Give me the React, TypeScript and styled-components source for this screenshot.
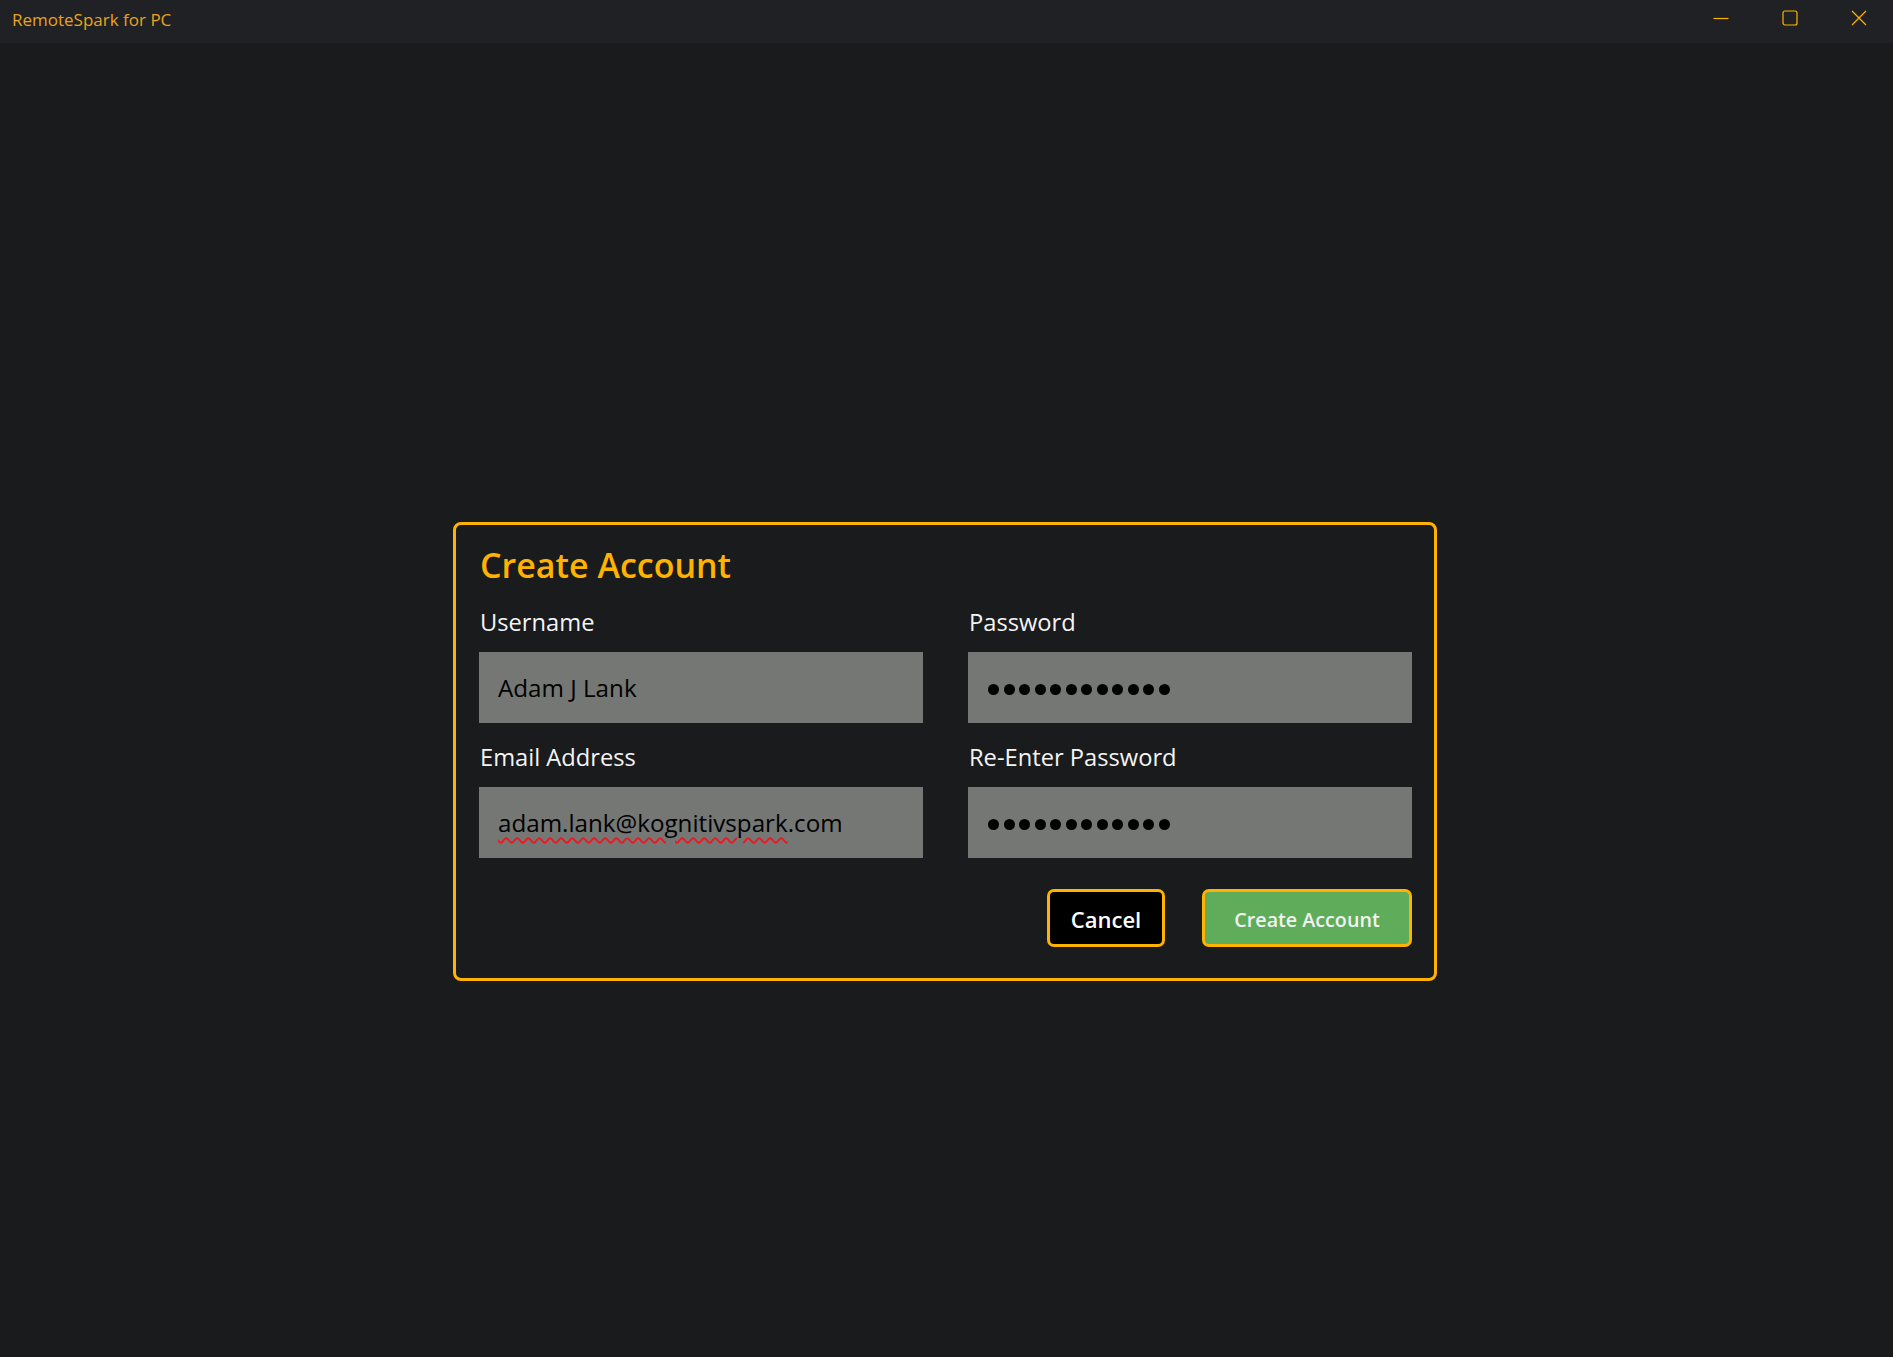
import React from "react";
import styled, { createGlobalStyle } from "styled-components";

const Global = createGlobalStyle`
  html, body { margin: 0; padding: 0; background: #1a1b1d; }
  body { font-family: "Open Sans", "Noto Sans", sans-serif; }
  * { box-sizing: border-box; }
`;

const Window = styled.div`
  width: 1893px;
  height: 1357px;
  display: flex;
  flex-direction: column;
  background: #1a1b1d;
  overflow: hidden;
`;

const TitleBar = styled.div`
  height: 43px;
  flex: none;
  display: flex;
  align-items: center;
  background: #1f2124;
`;

const AppTitle = styled.div`
  flex: 1;
  padding-left: 12px;
  font-size: 17px;
  color: #e9a31c;
  line-height: 1;
  padding-bottom: 4px;
`;

const Caption = styled.div`
  display: flex;
  height: 100%;
`;

const CaptionButton = styled.div`
  width: 69px;
  height: 100%;
  display: flex;
  align-items: flex-start;
  justify-content: center;
  padding-top: 10px;
`;

const Content = styled.div`
  flex: 1;
  display: flex;
  flex-direction: column;
  align-items: center;
  padding-top: 479px;
  padding-right: 3px;
`;

const Dialog = styled.div`
  width: 984px;
  border: 3px solid #ffb300;
  border-radius: 8px;
  padding: 20px 22px 31px 23px;
  display: flex;
  flex-direction: column;
`;

const Heading = styled.h1`
  margin: 0 0 22px 1px;
  font-size: 34px;
  line-height: 40px;
  font-weight: 600;
  color: #ffb300;
`;

const Grid = styled.div`
  display: grid;
  grid-template-columns: 444px 444px;
  column-gap: 45px;
  row-gap: 19px;
`;

const Field = styled.div`
  display: flex;
  flex-direction: column;
  gap: 15px;
`;

const Label = styled.label`
  font-size: 23.7px;
  line-height: 30px;
  color: #f4f4f4;
  padding-left: 1px;
`;

const Input = styled.div`
  height: 71px;
  background: #757775;
  display: flex;
  align-items: center;
  padding-left: 19px;
  font-size: 24.2px;
  color: #000;
`;

const Misspelled = styled.span`
  text-decoration: underline wavy #ee1620;
  text-decoration-thickness: 1.6px;
  text-underline-offset: 5px;
`;

const Dots = styled.div`
  display: flex;
  gap: 4.5px;
  padding-left: 1px;
  padding-top: 4px;
`;

const Dot = styled.span`
  width: 11px;
  height: 11px;
  border-radius: 50%;
  background: #000;
`;

const ButtonRow = styled.div`
  margin-top: 31px;
  display: flex;
  justify-content: flex-end;
  gap: 37px;
`;

const Button = styled.button<{ $primary?: boolean }>`
  height: 58px;
  width: ${(p) => (p.$primary ? "210px" : "118px")};
  border: 3px solid #ffb300;
  border-radius: 7px;
  background: ${(p) => (p.$primary ? "#5fad5a" : "#000")};
  color: ${(p) => (p.$primary ? "#f2f2f2" : "#fff")};
  font-family: "Open Sans", "Noto Sans", sans-serif;
  font-size: ${(p) => (p.$primary ? "19.7px" : "22px")};
  font-weight: 600;
  padding: 0;
  padding-top: 2px;
  cursor: pointer;
`;

const PasswordDots = () => (
  <Dots>
    {Array.from({ length: 12 }).map((_, i) => (
      <Dot key={i} />
    ))}
  </Dots>
);

export default function App() {
  return (
    <>
      <Global />
      <Window>
        <TitleBar>
          <AppTitle>RemoteSpark for PC</AppTitle>
          <Caption>
            <CaptionButton>
              <svg width="16" height="16" viewBox="0 0 16 16">
                <line x1="0.5" y1="8.5" x2="15.5" y2="8.5" stroke="#ffb300" strokeWidth="1.2" />
              </svg>
            </CaptionButton>
            <CaptionButton>
              <svg width="16" height="16" viewBox="0 0 16 16">
                <rect x="1" y="1" width="14" height="14" rx="2" fill="none" stroke="#ffb300" strokeWidth="1.2" />
              </svg>
            </CaptionButton>
            <CaptionButton>
              <svg width="16" height="16" viewBox="0 0 16 16">
                <path d="M1 1 L15 15 M15 1 L1 15" stroke="#ffb300" strokeWidth="1.2" />
              </svg>
            </CaptionButton>
          </Caption>
        </TitleBar>
        <Content>
          <Dialog>
            <Heading>Create Account</Heading>
            <Grid>
              <Field>
                <Label>Username</Label>
                <Input>Adam J Lank</Input>
              </Field>
              <Field>
                <Label>Password</Label>
                <Input>
                  <PasswordDots />
                </Input>
              </Field>
              <Field>
                <Label>Email Address</Label>
                <Input>
                  <span>
                    <Misspelled>adam.lank@kognitivspark</Misspelled>.com
                  </span>
                </Input>
              </Field>
              <Field>
                <Label>Re-Enter Password</Label>
                <Input>
                  <PasswordDots />
                </Input>
              </Field>
            </Grid>
            <ButtonRow>
              <Button>Cancel</Button>
              <Button $primary>Create Account</Button>
            </ButtonRow>
          </Dialog>
        </Content>
      </Window>
    </>
  );
}
